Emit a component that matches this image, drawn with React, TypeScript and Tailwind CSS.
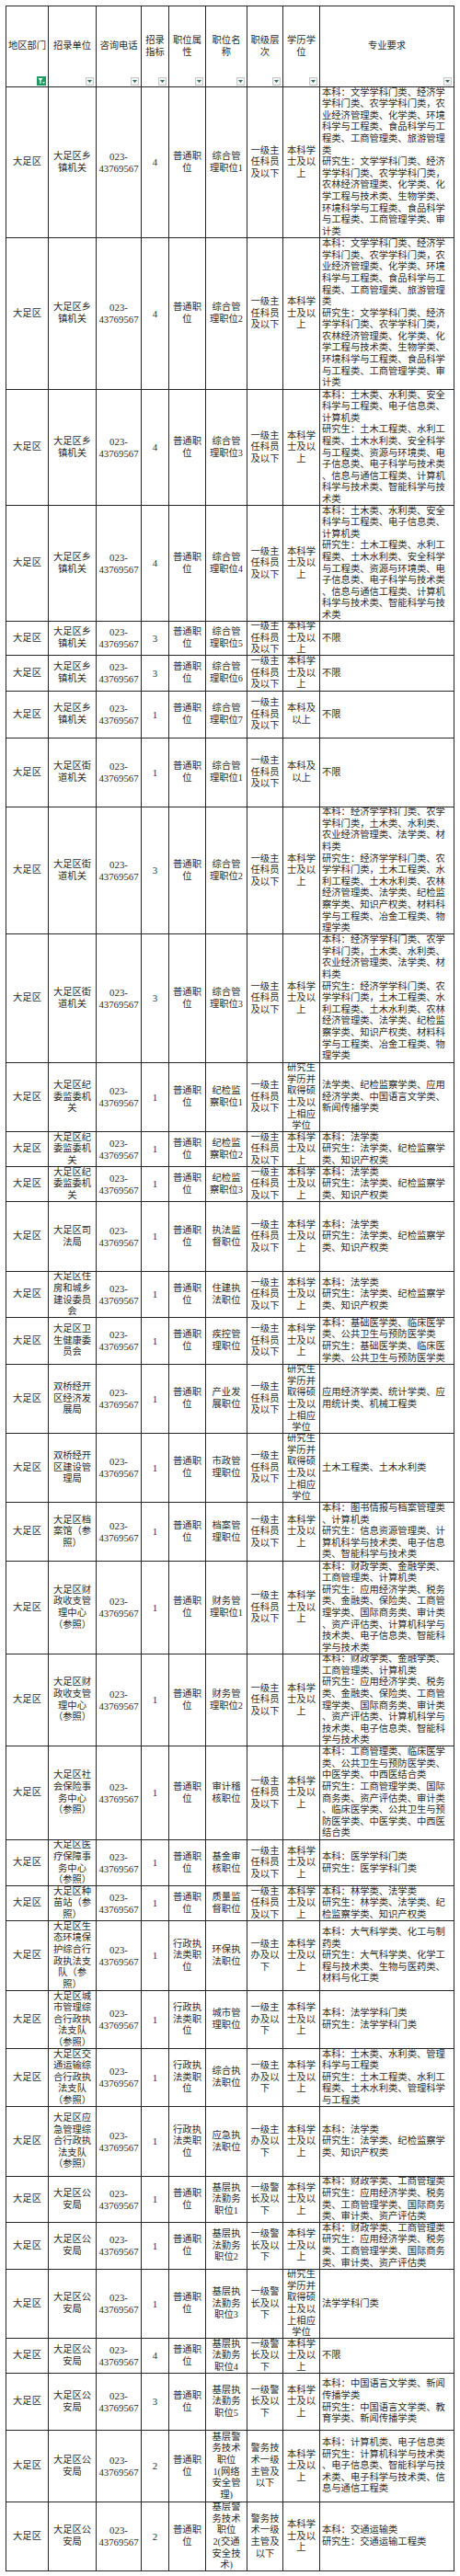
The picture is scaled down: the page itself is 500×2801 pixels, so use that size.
import React from "react";

const P = "023-|43769567";
const PT = "普通职|位";
const XZ = "行政执|法类职|位";
const KY = "一级主|任科员|及以下";
const ZB = "一级主|办及以|下";
const JZ = "一级警|长及以|下";
const JW = "警务技|术一级|主管及|以下";
const BK = "本科学|士及以|上";
const GR = "研究生|学历并|取得硕|士及以|上相应|学位";

const A1 =
  "本科：文学学科门类、经济学|学科门类、农学学科门类，农|业经济管理类、化学类、环境|科学与工程类、食品科学与工|程类、工商管理类、旅游管理|类|研究生：文学学科门类、经济|学学科门类、农学学科门类，|农林经济管理类、化学类、化|学工程与技术类、生物学类、|环境科学与工程类、食品科学|与工程类、工商管理学类、审|计类";
const A3 =
  "本科：土木类、水利类、安全|科学与工程类、电子信息类、|计算机类|研究生：土木工程类、水利工|程类、土木水利类、安全科学|与工程类、资源与环境类、电|子信息类、电子科学与技术类|、信息与通信工程类、计算机|科学与技术类、智能科学与技|术类";
const A9 =
  "本科：经济学学科门类、农学|学科门类，土木类、水利类、|农业经济管理类、法学类、材|料类|研究生：经济学学科门类、农|学学科门类，土木工程类、水|利工程类、土木水利类、农林|经济管理类、法学类、纪检监|察学类、知识产权类、材料科|学与工程类、冶金工程类、物|理学类";
const LAW = "本科：法学类|研究生：法学类、纪检监察学|类、知识产权类";
const FIN =
  "本科：财政学类、金融学类、|工商管理类、计算机类|研究生：应用经济学类、税务|类、金融类、保险类、工商管|理学类、国际商务类、审计类|、资产评估类、计算机科学与|技术类、电子信息类、智能科|学与技术类";
const POL = "本科：财政学类、工商管理类|研究生：应用经济学类、税务|类、工商管理学类、国际商务|类、审计类、资产评估类";

const D = "大足区";
const XZJG = "大足区乡|镇机关";
const JDJG = "大足区街|道机关";
const JW2 = "大足区纪|委监委机|关";
const GA = "大足区公|安局";

type Row = { h: string; c: string[] };

const rows: Row[] = [
  { h: "h-[164px]", c: [D, XZJG, P, "4", PT, "综合管|理职位1", KY, BK, A1] },
  { h: "h-[165px]", c: [D, XZJG, P, "4", PT, "综合管|理职位2", KY, BK, A1] },
  { h: "h-[126px]", c: [D, XZJG, P, "4", PT, "综合管|理职位3", KY, BK, A3] },
  { h: "h-[126px]", c: [D, XZJG, P, "4", PT, "综合管|理职位4", KY, BK, A3] },
  { h: "h-[37px]", c: [D, XZJG, P, "3", PT, "综合管|理职位5", KY, BK, "不限"] },
  { h: "h-[39px]", c: [D, XZJG, P, "3", PT, "综合管|理职位6", KY, BK, "不限"] },
  { h: "h-[51px]", c: [D, XZJG, P, "1", PT, "综合管|理职位7", KY, "本科及|以上", "不限"] },
  { h: "h-[75px]", c: [D, JDJG, P, "1", PT, "综合管|理职位1", KY, "本科及|以上", "不限"] },
  { h: "h-[138px]", c: [D, JDJG, P, "3", PT, "综合管|理职位2", KY, BK, A9] },
  { h: "h-[140px]", c: [D, JDJG, P, "3", PT, "综合管|理职位3", KY, BK, A9] },
  {
    h: "h-[75px]",
    c: [D, JW2, P, "1", PT, "纪检监|察职位1", KY, GR, "法学类、纪检监察学类、应用|经济学类、中国语言文学类、|新闻传播学类"],
  },
  { h: "h-[38px]", c: [D, JW2, P, "1", PT, "纪检监|察职位2", KY, BK, LAW] },
  { h: "h-[38px]", c: [D, JW2, P, "1", PT, "纪检监|察职位3", KY, BK, LAW] },
  { h: "h-[76px]", c: [D, "大足区司|法局", P, "1", PT, "执法监|督职位", KY, BK, LAW] },
  { h: "h-[50px]", c: [D, "大足区住|房和城乡|建设委员|会", P, "1", PT, "住建执|法职位", KY, BK, LAW] },
  {
    h: "h-[51px]",
    c: [D, "大足区卫|生健康委|员会", P, "1", PT, "疾控管|理职位", KY, BK, "本科：基础医学类、临床医学|类、公共卫生与预防医学类|研究生：基础医学类、临床医|学类、公共卫生与预防医学类"],
  },
  { h: "h-[75px]", c: [D, "双桥经开|区经济发|展局", P, "1", PT, "产业发|展职位", KY, GR, "应用经济学类、统计学类、应|用统计类、机械工程类"] },
  { h: "h-[75px]", c: [D, "双桥经开|区建设管|理局", P, "1", PT, "市政管|理职位", KY, GR, "土木工程类、土木水利类"] },
  {
    h: "h-[64px]",
    c: [D, "大足区档|案馆（参|照）", P, "1", PT, "档案管|理职位", KY, BK, "本科：图书情报与档案管理类|、计算机类|研究生：信息资源管理类、计|算机科学与技术类、电子信息|类、智能科学与技术类"],
  },
  { h: "h-[101px]", c: [D, "大足区财|政收支管|理中心|（参照）", P, "1", PT, "财务管|理职位1", KY, BK, FIN] },
  { h: "h-[100px]", c: [D, "大足区财|政收支管|理中心|（参照）", P, "1", PT, "财务管|理职位2", KY, BK, FIN] },
  {
    h: "h-[102px]",
    c: [D, "大足区社|会保险事|务中心|（参照）", P, "1", PT, "审计稽|核职位", KY, BK, "本科：工商管理类、临床医学|类、公共卫生与预防医学类、|中医学类、中西医结合类|研究生：工商管理学类、国际|商务类、资产评估类、审计类|、临床医学类、公共卫生与预|防医学类、中医学类、中西医|结合类"],
  },
  { h: "h-[50px]", c: [D, "大足区医|疗保障事|务中心|（参照）", P, "1", PT, "基金审|核职位", KY, BK, "本科：医学学科门类|研究生：医学学科门类"] },
  { h: "h-[38px]", c: [D, "大足区种|苗站（参|照）", P, "1", PT, "质量监|督职位", KY, BK, "本科：林学类、法学类|研究生：林学类、法学类、纪|检监察学类、知识产权类"] },
  {
    h: "h-[76px]",
    c: [D, "大足区生|态环境保|护综合行|政执法支|队（参|照）", P, "1", XZ, "环保执|法职位", ZB, BK, "本科：大气科学类、化工与制|药类|研究生：大气科学类、化学工|程与技术类、生物与医药类、|材料与化工类"],
  },
  { h: "h-[63px]", c: [D, "大足区城|市管理综|合行政执|法支队|（参照）", P, "1", XZ, "城市管|理职位", ZB, BK, "本科：法学学科门类|研究生：法学学科门类"] },
  {
    h: "h-[63px]",
    c: [D, "大足区交|通运输综|合行政执|法支队|（参照）", P, "1", XZ, "综合执|法职位", ZB, BK, "本科：土木类、水利类、管理|科学与工程类|研究生：土木工程类、水利工|程类、土木水利类、管理科学|与工程类"],
  },
  { h: "h-[76px]", c: [D, "大足区应|急管理综|合行政执|法支队|（参照）", P, "1", XZ, "应急执|法职位", ZB, BK, LAW] },
  { h: "h-[50px]", c: [D, GA, P, "1", PT, "基层执|法勤务|职位1", JZ, BK, POL] },
  { h: "h-[51px]", c: [D, GA, P, "1", PT, "基层执|法勤务|职位2", JZ, BK, POL] },
  { h: "h-[75px]", c: [D, GA, P, "1", PT, "基层执|法勤务|职位3", JZ, GR, "法学学科门类"] },
  { h: "h-[38px]", c: [D, GA, P, "4", PT, "基层执|法勤务|职位4", JZ, BK, "不限"] },
  { h: "h-[62px]", c: [D, GA, P, "3", PT, "基层执|法勤务|职位5", JZ, BK, "本科：中国语言文学类、新闻|传播学类|研究生：中国语言文学类、教|育学类、新闻传播学类"] },
  {
    h: "h-[78px]",
    c: [D, GA, P, "2", PT, "基层警|务技术|职位|1(网络|安全管|理)", JW, BK, "本科：计算机类、电子信息类|研究生：计算机科学与技术类|、电子信息类、智能科学与技|术类、电子科学与技术类、信|息与通信工程类"],
  },
  { h: "h-[75px]", c: [D, GA, P, "2", PT, "基层警|务技术|职位|2(交通|安全技|术)", JW, BK, "本科：交通运输类|研究生：交通运输工程类"] },
];

const headers = ["地区部门", "招录单位", "咨询电话", "招录|指标", "职位属|性", "职位名|称", "职级层|次", "学历学|位", "专业要求"];

function Lines({ text }: { text: string }) {
  return (
    <div className="whitespace-nowrap">
      {text.split("|").map((l, k) => (
        <div key={k}>{l}</div>
      ))}
    </div>
  );
}

function DropBtn() {
  return (
    <div className="absolute right-[2px] bottom-[1px] w-[9px] h-[9px] border border-[#c8c8c8] bg-[#f3f3f3] flex items-center justify-center">
      <svg width="5" height="3" viewBox="0 0 5 3">
        <polygon points="0,0 5,0 2.5,3" fill="#2e6b62" />
      </svg>
    </div>
  );
}

function FilterBtn() {
  return (
    <div className="absolute right-[2px] bottom-[1px] w-[10px] h-[10px] bg-[#1e9b62] flex items-center justify-center">
      <svg width="8" height="8" viewBox="0 0 8 8">
        <polygon points="0.5,1 5.5,1 3.6,3.6 3.6,7 2.4,7 2.4,3.6" fill="#ffffff" />
        <polygon points="5,5 8,5 6.5,7" fill="#ffffff" />
      </svg>
    </div>
  );
}

export default function App() {
  return (
    <div className="w-[500px] min-h-[2801px] bg-white pt-[6px] font-[family-name:'Liberation_Serif','Noto_Sans_CJK_SC',serif] text-[10.3px] leading-[12.6px] text-[#2b2b2b]">
      <div className="ml-[6px] w-[488px] border-t border-l border-[#262626] grid grid-cols-[46px_52px_49px_30px_40px_45px_39px_40px_146px]">
        {headers.map((h, i) => (
          <div
            key={"h" + i}
            className="relative h-[88px] border-r border-b border-[#262626] flex items-center justify-center text-center overflow-hidden"
          >
            <Lines text={h} />
            {i === 0 ? <FilterBtn /> : <DropBtn />}
          </div>
        ))}
        {rows.map((r, ri) =>
          r.c.map((c, ci) => (
            <div
              key={ri + "-" + ci}
              className={
                r.h +
                " border-r border-b border-[#262626] flex items-center overflow-hidden " +
                (ci === 8
                  ? "justify-start pl-[2px] text-left"
                  : ci === 2 || ci === 3
                  ? "justify-center text-center text-[10.8px]"
                  : "justify-center text-center")
              }
            >
              <Lines text={c} />
            </div>
          ))
        )}
      </div>
    </div>
  );
}
